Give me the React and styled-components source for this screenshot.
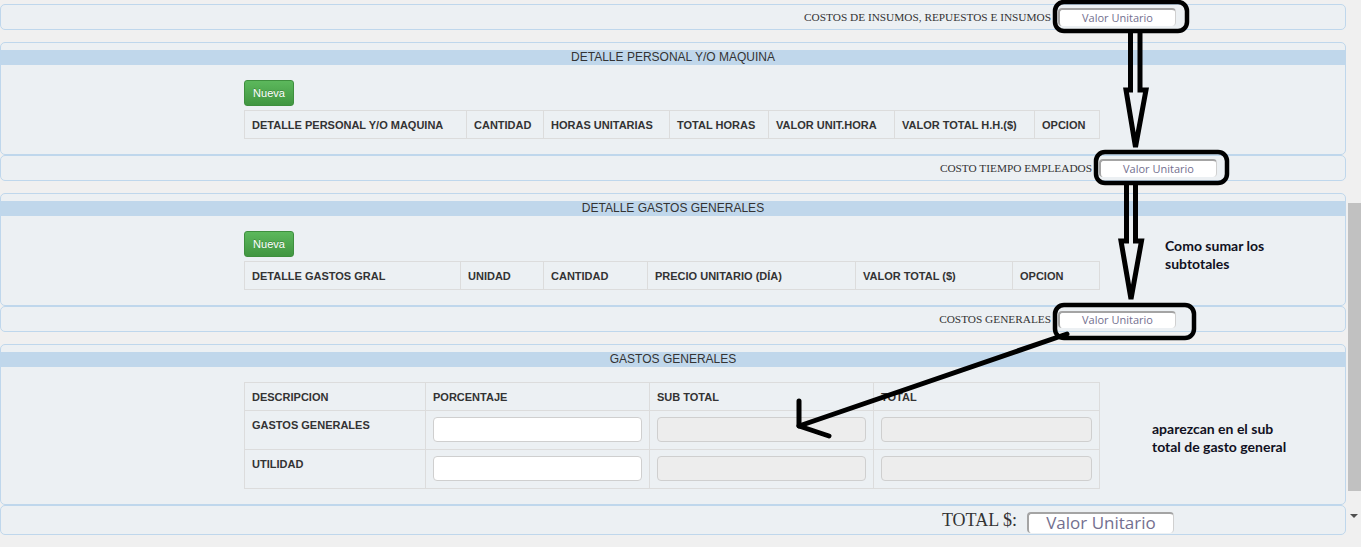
import React from "react";
import styled, { createGlobalStyle } from "styled-components";

const Global = createGlobalStyle`
  html, body { margin: 0; padding: 0; background: #f0f0f0; }
  body { font-family: "Liberation Sans", Arial, sans-serif; color: #333; overflow: hidden; }
  * { box-sizing: border-box; }
`;

const Page = styled.div`
  position: relative;
  display: flex;
  width: 1361px;
  height: 547px;
  overflow: hidden;
`;

const Content = styled.main`
  width: 1346px;
  flex: none;
  padding-top: 4px;
  display: flex;
  flex-direction: column;
`;

const Group = styled.section`
  display: flex;
  flex-direction: column;
  margin-bottom: 12px;
`;

const Panel = styled.div`
  background: #ecf0f3;
  border: 1px solid #bfd7ec;
  border-radius: 5px;
`;

const BigPanel = styled(Panel)`
  padding-top: 7px;
`;

const Band = styled.div`
  height: 15px;
  line-height: 15px;
  background: #c0d7eb;
  text-align: center;
  font-size: 12px;
  color: #333;
`;

const Body = styled.div`
  padding: 15px 0 15px 243px;
  display: flex;
  flex-direction: column;
  align-items: flex-start;
`;

const NewButton = styled.button`
  width: 50px;
  height: 26px;
  margin-bottom: 4px;
  border: 1px solid #3e8f3e;
  border-radius: 3px;
  background: linear-gradient(#5cb85c, #419641);
  color: #fff;
  font-family: "Liberation Sans", Arial, sans-serif;
  font-size: 11px;
  text-shadow: 0 -1px 0 rgba(0,0,0,0.2);
  padding: 0;
`;

const Table = styled.table`
  width: 855px;
  table-layout: fixed;
  border-collapse: collapse;
  font-size: 11px;
`;

const Col = styled.col`
  width: ${(p) => p.$w}px;
`;

const Th = styled.th`
  height: 28px;
  padding: 0 7px;
  border: 1px solid #dcdcdc;
  text-align: left;
  font-weight: bold;
  color: #333;
  white-space: nowrap;
  overflow: hidden;
`;

const Td = styled.td`
  height: 39px;
  padding: 6px 7px;
  border: 1px solid #dcdcdc;
  vertical-align: top;
  font-weight: bold;
  color: #333;
  line-height: 16px;
`;

const Field = styled.input`
  display: block;
  width: 100%;
  height: 25px;
  border: 1px solid #cfcfcf;
  border-radius: 4px;
  background: ${(p) => (p.disabled ? "#ededed" : "#fff")};
  outline: none;
`;

const RowPanel = styled(Panel)`
  height: ${(p) => p.$h || 26}px;
  display: flex;
  align-items: center;
  justify-content: flex-end;
  padding-right: ${(p) => p.$right}px;
  gap: ${(p) => p.$gap || 7}px;
`;

const SerifLabel = styled.span`
  font-family: "Liberation Serif", "Times New Roman", serif;
  font-size: ${(p) => p.$size || 11.3}px;
  color: #333;
  white-space: nowrap;
`;

const ValueBox = styled.div`
  width: ${(p) => p.$w || 118}px;
  height: ${(p) => p.$h || 18}px;
  background: #fff;
  border-top: 2px solid #a4a4a4;
  border-left: 2px solid #a4a4a4;
  border-right: 1px solid #d0d0d0;
  border-radius: 4px;
  font-family: "Open Sans", "DejaVu Sans", sans-serif;
  font-size: ${(p) => p.$fs || 11}px;
  line-height: ${(p) => p.$lh || 15}px;
  color: #736f8f;
  text-align: center;
  white-space: nowrap;
  margin-top: ${(p) => p.$mt || 0}px;
`;

const ScrollTrack = styled.div`
  width: 15px;
  flex: none;
  display: flex;
  flex-direction: column;
  align-items: flex-end;
`;

const Thumb = styled.div`
  width: 13px;
  height: 288px;
  margin-top: 203px;
  background: #c1c1c1;
`;

const DownArrow = styled.div`
  width: 0;
  height: 0;
  margin: 23px 3px 0 0;
  border-left: 4px solid transparent;
  border-right: 4px solid transparent;
  border-top: 4px solid #505050;
`;

const Overlay = styled.svg`
  position: absolute;
  left: 0;
  top: 0;
  pointer-events: none;
`;

const Note = styled.div`
  position: absolute;
  left: ${(p) => p.$x}px;
  top: ${(p) => p.$y}px;
  font-family: Lato, "Open Sans", sans-serif;
  font-weight: bold;
  font-size: 14px;
  line-height: 18px;
  color: #111122;
  white-space: nowrap;
`;

function DataTable({ widths, headers }) {
  return (
    <Table>
      <colgroup>
        {widths.map((w, i) => (
          <Col key={i} $w={w} />
        ))}
      </colgroup>
      <thead>
        <tr>
          {headers.map((h) => (
            <Th key={h}>{h}</Th>
          ))}
        </tr>
      </thead>
    </Table>
  );
}

export default function App() {
  return (
    <>
      <Global />
      <Page>
        <Content>
          <Group>
            <RowPanel $right={169}>
              <SerifLabel>COSTOS DE INSUMOS, REPUESTOS E INSUMOS</SerifLabel>
              <ValueBox>Valor Unitario</ValueBox>
            </RowPanel>
          </Group>

          <Group>
            <BigPanel>
              <Band>DETALLE PERSONAL Y/O MAQUINA</Band>
              <Body>
                <NewButton>Nueva</NewButton>
                <DataTable
                  widths={[222, 77, 126, 99, 126, 140, 65]}
                  headers={[
                    "DETALLE PERSONAL Y/O MAQUINA",
                    "CANTIDAD",
                    "HORAS UNITARIAS",
                    "TOTAL HORAS",
                    "VALOR UNIT.HORA",
                    "VALOR TOTAL H.H.($)",
                    "OPCION",
                  ]}
                />
              </Body>
            </BigPanel>
            <RowPanel $right={128}>
              <SerifLabel>COSTO TIEMPO EMPLEADOS</SerifLabel>
              <ValueBox>Valor Unitario</ValueBox>
            </RowPanel>
          </Group>

          <Group>
            <BigPanel>
              <Band>DETALLE GASTOS GENERALES</Band>
              <Body>
                <NewButton>Nueva</NewButton>
                <DataTable
                  widths={[216, 83, 104, 208, 157, 87]}
                  headers={[
                    "DETALLE GASTOS GRAL",
                    "UNIDAD",
                    "CANTIDAD",
                    "PRECIO UNITARIO (DÍA)",
                    "VALOR TOTAL ($)",
                    "OPCION",
                  ]}
                />
              </Body>
            </BigPanel>
            <RowPanel $right={169}>
              <SerifLabel>COSTOS GENERALES</SerifLabel>
              <ValueBox $h={17} $lh={14}>Valor Unitario</ValueBox>
            </RowPanel>
          </Group>

          <Group>
            <BigPanel>
              <Band>GASTOS GENERALES</Band>
              <Body>
                <Table>
                  <colgroup>
                    <Col $w={181} />
                    <Col $w={224} />
                    <Col $w={224} />
                    <Col $w={226} />
                  </colgroup>
                  <thead>
                    <tr>
                      <Th>DESCRIPCION</Th>
                      <Th>PORCENTAJE</Th>
                      <Th>SUB TOTAL</Th>
                      <Th>TOTAL</Th>
                    </tr>
                  </thead>
                  <tbody>
                    <tr>
                      <Td>GASTOS GENERALES</Td>
                      <Td><Field /></Td>
                      <Td><Field disabled /></Td>
                      <Td><Field disabled /></Td>
                    </tr>
                    <tr>
                      <Td>UTILIDAD</Td>
                      <Td><Field /></Td>
                      <Td><Field disabled /></Td>
                      <Td><Field disabled /></Td>
                    </tr>
                  </tbody>
                </Table>
              </Body>
            </BigPanel>
            <RowPanel $right={171} $h={30} $gap={10}>
              <SerifLabel $size={18}>TOTAL $:</SerifLabel>
              <ValueBox $w={147} $h={21} $fs={17} $lh={18} $mt={4}>Valor Unitario</ValueBox>
            </RowPanel>
          </Group>
        </Content>

        <ScrollTrack>
          <Thumb />
          <DownArrow />
        </ScrollTrack>

        <Overlay width="1361" height="547" viewBox="0 0 1361 547">
          <g fill="none" stroke="#000" strokeWidth="4.5" strokeLinejoin="round" strokeLinecap="round">
            <rect x="1055" y="2" width="132" height="29" rx="9" />
            <rect x="1096" y="152" width="131" height="31" rx="9" />
            <rect x="1055" y="305" width="139" height="33" rx="9" />
          </g>
          <g fill="none" stroke="#000" strokeWidth="5" strokeLinejoin="miter">
            <polyline points="1130.5,31 1130.5,90 1126,90 1135.5,147 1146,90 1140,90 1140,31" />
            <polyline points="1126.5,183 1126.5,241 1121,241 1131,299 1141.5,241 1135.5,241 1135.5,183" />
          </g>
          <g fill="none" stroke="#000" strokeWidth="5" strokeLinecap="round" strokeLinejoin="round">
            <line x1="1067" y1="334" x2="799" y2="426" />
            <polyline points="799,401 799,426 829,436" />
          </g>
        </Overlay>

        <Note $x={1165} $y={237}>
          Como sumar los
          <br />
          subtotales
        </Note>
        <Note $x={1152} $y={420}>
          aparezcan en el sub
          <br />
          total de gasto general
        </Note>
      </Page>
    </>
  );
}
